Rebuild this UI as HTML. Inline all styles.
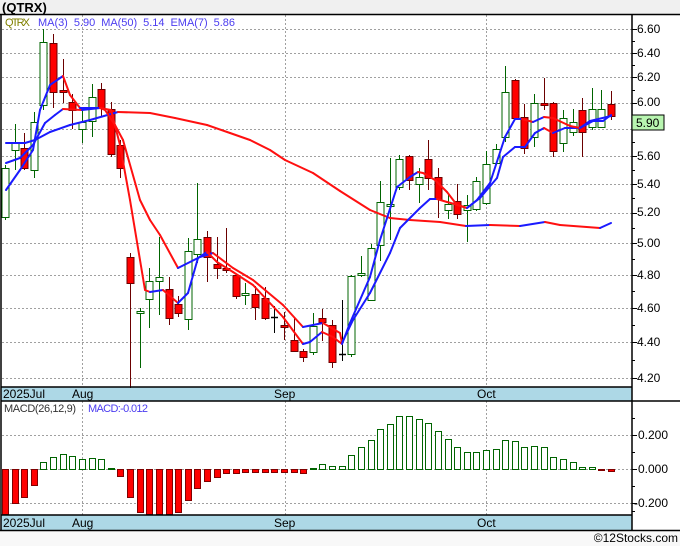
<!DOCTYPE html>
<html><head><meta charset="utf-8"><style>
html,body{margin:0;padding:0;background:#fff;}
body{width:680px;height:546px;position:relative;overflow:hidden;font-family:"Liberation Sans","DejaVu Sans",sans-serif;}
svg{position:absolute;left:0;top:0;}
</style></head><body>
<svg id="s" width="680" height="546" xmlns="http://www.w3.org/2000/svg" font-family="Liberation Sans, DejaVu Sans, sans-serif">
<rect x="0" y="0" width="680" height="14" fill="#f0f0f0"/>
<rect x="0" y="531" width="680" height="15" fill="#f8f8f8"/>
<text x="2" y="12" font-size="13" font-weight="bold" fill="#000">(QTRX)</text>
<g id="grid"></g>
<rect x="1" y="387" width="631" height="14" fill="#add8e6"/>
<rect x="1" y="515" width="631" height="15" fill="#add8e6"/>
<g id="macd"></g>
<g id="candles"></g>
<g id="lines" fill="none" stroke-width="2" stroke-linejoin="round" stroke-linecap="round"></g>
<g stroke="#000" stroke-width="1.5" fill="none">
<line x1="0" y1="14.5" x2="680" y2="14.5"/>
<line x1="1" y1="14" x2="1" y2="530"/>
<line x1="632" y1="14" x2="632" y2="530"/>
<line x1="1" y1="387" x2="632" y2="387"/>
<line x1="1" y1="401" x2="680" y2="401"/>
<line x1="1" y1="515" x2="632" y2="515"/>
<line x1="0" y1="530.5" x2="680" y2="530.5"/>
</g>
<g id="ticks" stroke="#000" stroke-width="1"></g>
<g font-size="12" fill="#000">
<text x="3" y="398" textLength="42">2025Jul</text><text x="72" y="398">Aug</text><text x="274" y="398">Sep</text><text x="477" y="398">Oct</text>
<text x="3" y="527" textLength="42">2025Jul</text><text x="72" y="527">Aug</text><text x="274" y="527">Sep</text><text x="477" y="527">Oct</text>
</g>
<g font-size="12" fill="#000">
<text x="637" y="33">6.60</text><text x="637" y="57">6.40</text><text x="637" y="81">6.20</text><text x="637" y="106">6.00</text>
<text x="637" y="160">5.60</text><text x="637" y="188">5.40</text><text x="637" y="216">5.20</text><text x="637" y="247">5.00</text>
<text x="637" y="279">4.80</text><text x="637" y="312">4.60</text><text x="637" y="346">4.40</text><text x="637" y="382">4.20</text>
<text x="638" y="439">0.200</text><text x="638" y="473">0.000</text><text x="634" y="507">-0.200</text>
</g>
<rect x="632" y="115" width="32" height="15" fill="#b8f5b0" stroke="#000" stroke-width="1"/>
<text x="636" y="127" font-size="12" fill="#000">5.90</text>
<text x="5" y="26" font-size="11" fill="#808000" textLength="25">QTRX</text>
<text x="38" y="26" font-size="11" fill="#4b3cf0" textLength="197" xml:space="preserve">MA(3)  5.90  MA(50)  5.14  EMA(7)  5.86</text>
<text x="4" y="412" font-size="11" fill="#333" textLength="72">MACD(26,12,9)</text>
<text x="88" y="412" font-size="11" fill="#4b3cf0" textLength="60">MACD:-0.012</text>
<text x="678" y="542" font-size="12" fill="#000" text-anchor="end">©12Stocks.com</text>
</svg>
<script>
var NS="http://www.w3.org/2000/svg";
function el(p,t,a){var e=document.createElementNS(NS,t);for(var k in a)e.setAttribute(k,a[k]);document.getElementById(p).appendChild(e);return e;}
function py(p){return 29+Math.log(6.6/p)*772;}
[6.6,6.4,6.2,6.0,5.8,5.6,5.4,5.2,5.0,4.8,4.6,4.4,4.2].forEach(function(p){var y=Math.round(py(p))+.5;
el("grid","line",{x1:2,y1:y,x2:632,y2:y,stroke:"#a0a0a0","stroke-dasharray":"2,2"});
el("ticks","line",{x1:632,y1:y,x2:637,y2:y});});
[6.5,6.3,6.1,5.9,5.7,5.5,5.3,5.1,4.9,4.7,4.5,4.3].forEach(function(p){var y=Math.round(py(p))+.5;el("ticks","line",{x1:632,y1:y,x2:635,y2:y});});
[435,469,503].forEach(function(y){y+=.5;el("grid","line",{x1:2,y1:y,x2:632,y2:y,stroke:"#a0a0a0","stroke-dasharray":"2,2"});el("ticks","line",{x1:632,y1:y,x2:637,y2:y});});
[418,452,486,511].forEach(function(y){el("ticks","line",{x1:632,y1:y+.5,x2:635,y2:y+.5});});
[82,285,486].forEach(function(x){x+=.5;el("grid","line",{x1:x,y1:15,x2:x,y2:387,stroke:"#a0a0a0","stroke-dasharray":"2,2"});el("grid","line",{x1:x,y1:401,x2:x,y2:515,stroke:"#a0a0a0","stroke-dasharray":"2,2"});});
var C=[["g",168,217,165,220],["g",143,150,124,170],["r",148,168,133,170],["g",122,170,112,178],["g",42,105,29,110],["r",43,92,34,108],["r",90,92,59,103],["r",102,110,94,129],["g",122,129,107,143],["g",97,121,84,137],["r",89,108,83,117],["r",109,154,102,157],["r",145,168,140,178],["r",257,283,253,388],["g",311,313,308,368],["g",281,299,268,328],["g",277,281,237,315],["r",289,318,277,325],["r",304,313,296,317],["g",251,319,238,330],["g",239,254,183,263],["r",237,257,231,282],["r",264,268,237,279],["r",268,270,228,273],["r",275,296,275,299],["g",293,295,283,305],["r",294,307,286,320],["r",298,318,287,320],["k",317,317,306,333],["r",325,327,312,340],["r",340,351,318,351],["r",351,357,349,362],["g",326,352,313,355],["r",318,322,309,341],["r",325,362,320,368],["k",354,354,300,361],["g",276,354,275,357],["g",273,275,256,277],["g",248,300,244,300],["g",202,245,181,261],["g",204,206,158,240],["g",159,187,155,190],["r",156,180,155,190],["g",177,184,168,203],["r",159,178,140,190],["r",177,199,168,218],["g",204,210,195,219],["r",201,214,184,219],["g",205,210,195,242],["g",181,209,177,211],["g",164,203,151,205],["g",149,163,144,165],["g",92,137,66,142],["r",80,118,79,120],["r",117,148,104,154],["g",103,137,94,147],["r",103,105,78,110],["r",103,151,102,157],["g",118,143,110,152],["g",122,132,109,136],["r",110,132,98,157],["g",109,127,88,130],["g",109,127,90,127],["r",104,116,91,120]];
var M=[-46,-34,-28,-16,7,12,15,13,10,11,10,1,-7,-28,-43,-46,-45,-46,-43,-31,-19,-12,-8,-4,-4,-3,-3,-3,-3,-3,-3,-4,1,5,3,3,14,22,29,40,45,53,53,50,46,38,30,22,17,17,19,20,29,28,22,23,22,12,10,7,2,2,-0.5,-2];
function X(i){return 5+9.62*i;}
C.forEach(function(c,i){var x=Math.round(X(i));var col=c[0]=="g"?"#006400":(c[0]=="k"?"#000":"#6b0000");
el("candles","line",{x1:x+.5,y1:c[3],x2:x+.5,y2:c[4],stroke:col,"stroke-width":1});
var h=c[2]-c[1];if(h<2){el("candles","line",{x1:x-3,y1:c[1]+.5,x2:x+4,y2:c[1]+.5,stroke:col,"stroke-width":1.5});}
else el("candles","rect",{x:x-3,y:c[1]+.5,width:7,height:h,fill:c[0]=="g"?"#fff":"#ff0000",stroke:col,"stroke-width":1});});
M.forEach(function(v,i){var x=Math.round(X(i));var g=v>=0&&i!=62&&i!=63;var y=v>=0?469-v:469;var h=Math.max(Math.abs(v),1);
if(y<402){h-=402-y;y=402;} if(y+h>514)h=514-y;
el("macd","rect",{x:x-3+.5,y:y+.5,width:6,height:h,fill:g?"#fff":"#ff0000",stroke:g?"#006400":"#800000","stroke-width":1});});
var L=[
[[6,143],[25,143],[35,140],[50,132],[70,125],[90,120],[118,112],[150,113],[175,118],[207,125],[230,133],[250,140],[270,150],[285,160],[313,173],[340,191],[370,210],[390,218],[410,220],[440,222],[466,226],[490,225],[520,226],[545,222],[560,225],[600,228],[611,223]],
[[6,163],[20,158],[33,145],[45,123],[55,115],[63,109],[82,110],[100,108],[105,110],[115,125],[123,140],[140,200],[150,220],[160,235],[178,268],[200,257],[213,253],[233,268],[253,280],[283,305],[303,327],[323,323],[340,333],[342,343],[353,320],[370,293],[390,253],[400,228],[420,208],[430,199],[437,199],[447,202],[458,205],[467,208],[480,198],[497,178],[503,157],[515,147],[525,147],[535,133],[544,128],[553,133],[565,128],[580,128],[590,121],[611,116]],
[[6,190],[20,170],[33,150],[40,110],[50,85],[63,76],[70,95],[80,108],[100,108],[111,110],[120,145],[130,200],[145,290],[150,292],[163,290],[178,303],[188,293],[198,258],[207,252],[217,262],[233,272],[253,285],[283,317],[303,344],[310,342],[322,332],[333,337],[342,344],[350,323],[370,277],[380,240],[397,187],[410,177],[418,172],[423,173],[435,180],[447,192],[457,205],[467,208],[477,200],[490,183],[505,137],[515,119],[522,119],[533,122],[544,117],[553,118],[570,126],[580,128],[593,121],[603,121],[611,115]]];
L.forEach(function(pts){for(var i=1;i<pts.length;i++){var a=pts[i-1],b=pts[i];
el("lines","line",{x1:a[0],y1:a[1],x2:b[0],y2:b[1],stroke:b[1]>a[1]+0.5?"#ff1010":"#1a1aff"});}});
</script>
</body></html>
